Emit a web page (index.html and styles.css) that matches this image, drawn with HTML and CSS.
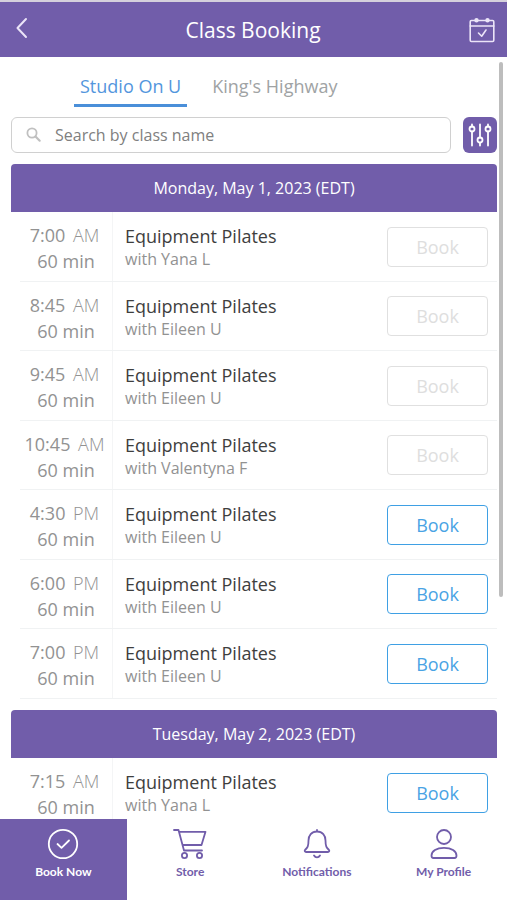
FILE: index.html
```html
<!DOCTYPE html>
<html lang="en">
<head>
<meta charset="utf-8">
<meta name="viewport" content="width=device-width, initial-scale=1">
<title>Class Booking</title>
<link rel="stylesheet" href="styles.css">
</head>
<body>
<header class="topbar">
  <button class="icon-button" type="button" aria-label="Back">
    <svg width="22" height="26" viewBox="0 0 22 26"><path d="M15 2 6.500 11l8.500 9" stroke-width="2"/></svg>
  </button>
  <h1 class="topbar-title">Class Booking</h1>
  <button class="icon-button" type="button" aria-label="My schedule">
    <svg width="26" height="26" viewBox="0 0 26 26"><rect x="1.2" y="3.5" width="23.6" height="21" rx="1.2"/><path d="M1.2 9h23.6"/><path d="m9.500 16 3.200 3.200 4.300-6.200"/><circle class="pin" cx="7.5" cy="3.200" r="2.200"/><circle class="pin" cx="18.5" cy="3.200" r="2.200"/></svg>
  </button>
</header>
<main class="content">
  <nav class="tabs" aria-label="Locations">
    <a class="tab active" href="#studio">Studio On U</a>
    <a class="tab" href="#highway">King's Highway</a>
  </nav>
  <form class="search-row">
    <label class="search">
      <svg width="16" height="16" viewBox="0 0 16 16"><circle cx="6" cy="6" r="4.600"/><path d="m9.500 9.500 4.200 4.200" stroke-width="2.200"/></svg>
      <input type="search" placeholder="Search by class name" aria-label="Search by class name">
    </label>
    <button class="filter" type="button" aria-label="Filters">
      <svg width="24" height="24" viewBox="0 0 24 24"><path d="M4 1.500v2M4 8.500v14M12 1.500v13M12 20v2.500M20 1.500v2M20 8.500v14"/><circle cx="4" cy="6" r="2.500"/><circle cx="12" cy="17" r="2.500"/><circle cx="20" cy="6" r="2.500"/></svg>
    </button>
  </form>
  <section class="day">
    <h2 class="day-title">Monday, May 1, 2023 (EDT)</h2>
    <ul class="classes">
      <li class="class"><div class="time"><span>7:00 <small>AM</small></span><span>60 min</span></div><div class="info"><h3>Equipment Pilates</h3><p>with Yana L</p></div><button class="book" type="button" disabled>Book</button></li>
      <li class="class"><div class="time"><span>8:45 <small>AM</small></span><span>60 min</span></div><div class="info"><h3>Equipment Pilates</h3><p>with Eileen U</p></div><button class="book" type="button" disabled>Book</button></li>
      <li class="class"><div class="time"><span>9:45 <small>AM</small></span><span>60 min</span></div><div class="info"><h3>Equipment Pilates</h3><p>with Eileen U</p></div><button class="book" type="button" disabled>Book</button></li>
      <li class="class"><div class="time"><span>10:45 <small>AM</small></span><span>60 min</span></div><div class="info"><h3>Equipment Pilates</h3><p>with Valentyna F</p></div><button class="book" type="button" disabled>Book</button></li>
      <li class="class"><div class="time"><span>4:30 <small>PM</small></span><span>60 min</span></div><div class="info"><h3>Equipment Pilates</h3><p>with Eileen U</p></div><button class="book" type="button">Book</button></li>
      <li class="class"><div class="time"><span>6:00 <small>PM</small></span><span>60 min</span></div><div class="info"><h3>Equipment Pilates</h3><p>with Eileen U</p></div><button class="book" type="button">Book</button></li>
      <li class="class"><div class="time"><span>7:00 <small>PM</small></span><span>60 min</span></div><div class="info"><h3>Equipment Pilates</h3><p>with Eileen U</p></div><button class="book" type="button">Book</button></li>
    </ul>
  </section>
  <section class="day">
    <h2 class="day-title">Tuesday, May 2, 2023 (EDT)</h2>
    <ul class="classes">
      <li class="class"><div class="time"><span>7:15 <small>AM</small></span><span>60 min</span></div><div class="info"><h3>Equipment Pilates</h3><p>with Yana L</p></div><button class="book" type="button">Book</button></li>
    </ul>
  </section>
  <div class="scroll-thumb"></div>
</main>
<nav class="bottom-nav" aria-label="Main">
  <a class="nav-item active" href="#book"><svg width="32" height="32" viewBox="0 0 32 32"><circle cx="16" cy="16" r="14.200"/><path d="m10.500 16 4 3.800 7.500-7.300"/></svg>Book Now</a>
  <a class="nav-item" href="#store"><svg width="34" height="32" viewBox="0 0 34 32"><path d="M1 2h4.500l5.500 20.500h18M6 3.800h26.500l-4 13.200H9.500"/><circle cx="11.500" cy="27.500" r="2.600"/><circle cx="26.500" cy="27.500" r="2.600"/></svg>Store</a>
  <a class="nav-item" href="#notifications"><svg width="32" height="32" viewBox="0 0 32 32"><path d="M16 2v1.500M16 3.500c-5.500 0-8.500 4.200-8.500 9 0 6-1 7-3.500 9.500-.8 1 0 2 1 2h22c1 0 1.800-1 1-2-2.500-2.500-3.500-3.500-3.500-9.500 0-4.800-3-9-8.500-9zM13 27.500c1.500 2.500 4.500 2.500 6 0"/></svg>Notifications</a>
  <a class="nav-item" href="#profile"><svg width="32" height="32" viewBox="0 0 32 32"><circle cx="16" cy="9" r="7"/><path d="M5.500 30c-1.500 0-2-1-2-2.200 0-4.800 5-8 12.500-8s12.500 3.200 12.500 8c0 1.200-.5 2.200-2 2.200z"/></svg>My Profile</a>
</nav>
</body>
</html>
```
FILE: styles.css
```css
* { box-sizing: border-box; }
body {
  margin: 0;
  height: 100vh;
  display: flex;
  flex-direction: column;
  overflow: hidden;
  background: #fff;
  color: #3e3e3e;
  font-family: "Open Sans", sans-serif;
}
h1, h2, h3, p, ul { margin: 0; padding: 0; font-weight: 400; }
ul { list-style: none; }
a { text-decoration: none; color: inherit; }
button { font: inherit; cursor: pointer; }
svg { display: block; flex: none; fill: none; stroke: currentColor; stroke-width: 1.8; stroke-linecap: round; stroke-linejoin: round; }

.topbar {
  flex: none;
  display: grid;
  grid-template-columns: 1fr auto 1fr;
  align-items: center;
  height: 57px;
  padding: 0 12px 0 11px;
  border-top: 2px solid #d5d0dc;
  background: #715daa;
  color: #fff;
}
.topbar-title { font-size: 21px; line-height: 28px; }
.icon-button {
  justify-self: start;
  padding: 0;
  border: 0;
  background: none;
  color: #ebe4f8;
}
.icon-button:last-child { justify-self: end; }
.icon-button svg { stroke-width: 1.6; }
.pin { fill: currentColor; stroke: none; }

.content {
  flex: 1;
  min-height: 0;
  position: relative;
  overflow: hidden;
  padding: 0 10px 0 11px;
}
.tabs { display: flex; gap: 19px; padding: 12px 0 10px 63px; }
.tab {
  padding: 4px 6px 5px;
  border-bottom: 3px solid transparent;
  font-size: 18px;
  line-height: 26px;
  color: #a0a3a4;
}
.tab.active { color: #5396dd; border-color: #4a8fd9; }

.search-row { display: flex; gap: 12px; margin-bottom: 11px; }
.search {
  flex: 1;
  display: flex;
  align-items: center;
  gap: 13px;
  height: 36px;
  padding: 0 14px;
  border: 1px solid #d0d0d0;
  border-radius: 6px;
  color: #c0c0c0;
}
.search input {
  flex: 1;
  min-width: 0;
  padding: 0;
  border: 0;
  outline: 0;
  background: none;
  font: 16px/24px "Open Sans", sans-serif;
}
.search input::placeholder { color: #808080; }
.filter {
  display: grid;
  place-items: center;
  width: 34px;
  height: 36px;
  padding: 0;
  border: 0;
  border-radius: 6px;
  background: #715daa;
  color: #fff;
}

.day { margin-bottom: 11px; }
.day-title {
  padding: 12px 0;
  border-radius: 4px 4px 0 0;
  background: #715daa;
  color: #fff;
  font-size: 16px;
  line-height: 24px;
  text-align: center;
}
.class {
  display: flex;
  align-items: center;
  min-height: 70px;
  margin-left: 9px;
  padding-right: 9px;
  border-bottom: 1px solid #f0f2f3;
}
.class:nth-child(even) { min-height: 69px; }
.time {
  align-self: stretch;
  flex: none;
  display: flex;
  flex-direction: column;
  width: 93px;
  padding-top: 10px;
  border-right: 1px solid #f4f5f6;
  color: #929292;
  font-size: 18px;
  line-height: 26px;
  text-align: center;
}
.time small { margin: 0 3px; font-size: 18px; font-weight: 300; }
.info { flex: 1; align-self: stretch; padding: 12px 0 0 12px; }
.info h3 { font-size: 18px; line-height: 24px; }
.info p { color: #929292; font-size: 16px; line-height: 22px; }
.book {
  width: 101px;
  height: 40px;
  padding: 0;
  border: 1px solid #3fa0e4;
  border-radius: 4px;
  background: #fff;
  color: #49a3e4;
  font-size: 18px;
}
.book:disabled { border-color: #e0e0e0; color: #dedede; cursor: default; }

.scroll-thumb {
  position: absolute;
  top: 5px;
  right: 4px;
  width: 4px;
  height: 535px;
  border-radius: 2px;
  background: #bdbdbd;
}

.bottom-nav {
  flex: none;
  display: grid;
  grid-template-columns: repeat(4, 1fr);
  height: 81px;
  background: #fff;
  color: #715daa;
}
.nav-item {
  display: flex;
  flex-direction: column;
  align-items: center;
  gap: 4px;
  padding-top: 9px;
  font-family: Lato, sans-serif;
  font-size: 12px;
  line-height: 16px;
  font-weight: 700;
}
.nav-item.active { background: #715daa; color: #fff; }
```
